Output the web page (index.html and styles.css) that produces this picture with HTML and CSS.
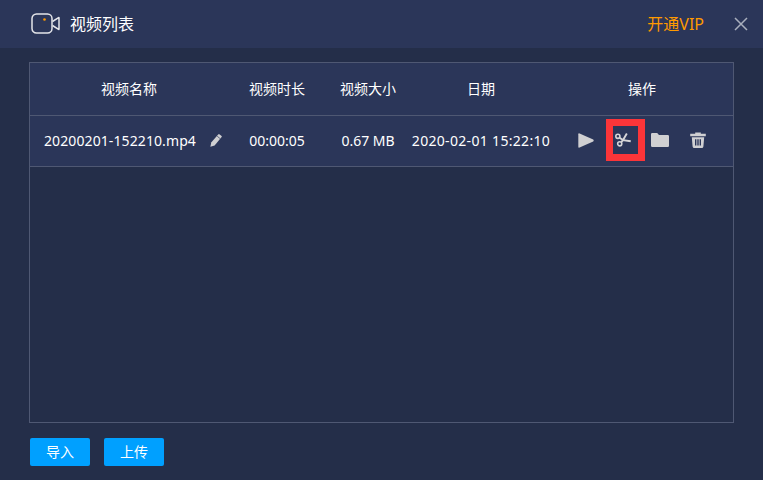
FILE: index.html
```html
<!DOCTYPE html>
<html lang="zh">
<head>
<meta charset="utf-8">
<title>视频列表</title>
<link rel="stylesheet" href="styles.css">
</head>
<body>
<header class="titlebar">
  <svg class="cam" width="29" height="21" viewBox="0 0 29 21" fill="none">
    <rect x="1" y="1" width="20" height="19" rx="4.5" stroke="#e4e5e9" stroke-width="1.5"/>
    <path d="M21.5 8.5 L27.6 4.6 Q28 4.4 28 5 V16 Q28 16.6 27.6 16.4 L21.5 12.5" stroke="#e4e5e9" stroke-width="1.5" stroke-linejoin="round"/>
    <circle cx="13.5" cy="6.5" r="1.3" fill="#ff9a00"/>
  </svg>
  <h1 class="title">视频列表</h1>
  <a class="vip">开通VIP</a>
  <svg class="close" width="14" height="14" viewBox="0 0 14 14"><path d="M1 1 L13 13 M13 1 L1 13" stroke="#a9afbd" stroke-width="1.5"/></svg>
</header>
<main class="content">
  <section class="table">
    <div class="grid head">
      <div>视频名称</div><div>视频时长</div><div>视频大小</div><div>日期</div><div>操作</div>
    </div>
    <div class="grid row">
      <div class="name"><span class="filename">20200201-152210.mp4</span>
        <svg class="pencil" width="12" height="13" viewBox="0 0 12 13"><path d="M8.4 .3 Q8.9 0 9.4 .3 L11.6 2.1 Q12 2.6 11.6 3.1 L4.6 11.4 L.4 12.8 L1.2 8.4 Z" fill="#d0d0d2"/><path d="M7.2 2.2 L10 4.5" stroke="#2b3659" stroke-width=".7"/></svg>
      </div>
      <div>00:00:05</div>
      <div>0.67 MB</div>
      <div class="date">2020-02-01 15:22:10</div>
      <div class="ops">
        <svg class="play" width="16" height="15" viewBox="0 0 16 15"><path d="M.3 1.2 Q.3 -.1 1.6 .4 L15.2 6.6 Q16.2 7.5 15.2 8.4 L1.6 14.6 Q.3 15.1 .3 13.8 Z" fill="#d0d0d2"/></svg>
        <span class="hilite">
          <svg class="scissors" width="16" height="14" viewBox="0 0 17 15" fill="none">
            <circle cx="3" cy="3.6" r="2.2" stroke="#d6d6d8" stroke-width="1.7"/>
            <circle cx="5" cy="11.6" r="2.2" stroke="#d6d6d8" stroke-width="1.7"/>
            <path d="M4.8 5 L8.5 7.6 L16.8 8.8 M6.6 9.8 L8.5 7.6 L12.6 .6" stroke="#d6d6d8" stroke-width="2"/>
          </svg>
        </span>
        <svg class="folder" width="18" height="14" viewBox="0 0 18 14"><path d="M0 1.2 Q0 0 1.2 0 H6.2 L8 2 H16.8 Q18 2 18 3.2 V12.8 Q18 14 16.8 14 H1.2 Q0 14 0 12.8 Z" fill="#d0d0d2"/></svg>
        <svg class="trash" width="16" height="16" viewBox="0 0 16 16"><path d="M5.2 1.8 V.4 H10.8 V1.8 H15.8 V4.2 H.2 V1.8 Z" fill="#d0d0d2"/><path fill-rule="evenodd" d="M1.8 5.2 H14.2 L13.4 14.5 Q13.2 16 11.8 16 H4.2 Q2.8 16 2.6 14.5 Z M5 7.2 V13.6 H6.4 V7.2 Z M7.3 7.2 V13.6 H8.7 V7.2 Z M9.6 7.2 V13.6 H11 V7.2 Z" fill="#d0d0d2"/></svg>
      </div>
    </div>
  </section>
  <div class="actions">
    <button class="btn">导入</button>
    <button class="btn">上传</button>
  </div>
</main>
</body>
</html>
```
FILE: styles.css
```css
* { box-sizing: border-box; }
html, body { margin: 0; height: 100%; }
body {
  width: 763px;
  height: 480px;
  overflow: hidden;
  background: #242e49;
  color: #fff;
  font-family: "Noto Sans", "Noto Sans CJK SC", sans-serif;
  font-size: 14px;
}
.titlebar {
  height: 48px;
  background: #2b3659;
  display: flex;
  align-items: center;
  padding: 0 15px 0 31px;
}
.cam { margin-right: 10px; margin-top: -2px; }
.title {
  margin: 0;
  font-size: 16px;
  font-weight: 400;
  flex: 1;
  padding-bottom: 2px;
}
.vip { color: #ff9a00; font-size: 16px; margin-right: 30px; padding-bottom: 2px; }
.close { margin-top: -1px; }
.content { padding: 14px 29px 0; }
.table {
  width: 705px;
  height: 361px;
  border: 1px solid #4f5873;
}
.grid {
  display: grid;
  grid-template-columns: 198px 98px 84px 142px 180px;
  align-items: center;
  text-align: center;
}
.head {
  height: 53px;
  background: #2b3659;
  border-bottom: 1px solid #4f5873;
  padding-bottom: 3px;
}
.row {
  height: 51px;
  background: #2b3659;
  border-bottom: 1px solid #4f5873;
  padding-bottom: 2px;
}
.name {
  display: flex;
  align-items: center;
  padding-left: 14px;
}
.filename { letter-spacing: .1px; }
.date { letter-spacing: .32px; }
.pencil { margin-left: 14px; }
.ops {
  display: flex;
  align-items: center;
  padding-left: 26px;
}
.hilite {
  width: 39px;
  height: 42px;
  border: 7px solid #fb3539;
  display: flex;
  align-items: center;
  justify-content: center;
  margin-left: 12px;
  margin-right: 6px;
}
.scissors { margin-right: 5px; }
.trash { margin-left: 21px; }
.actions {
  display: flex;
  gap: 14px;
  padding: 15px 1px 0;
}
.btn {
  width: 60px;
  height: 28px;
  padding: 0 0 2px;
  border: 0;
  border-radius: 2px;
  background: #00a0ff;
  color: #fff;
  font: inherit;
}
```
